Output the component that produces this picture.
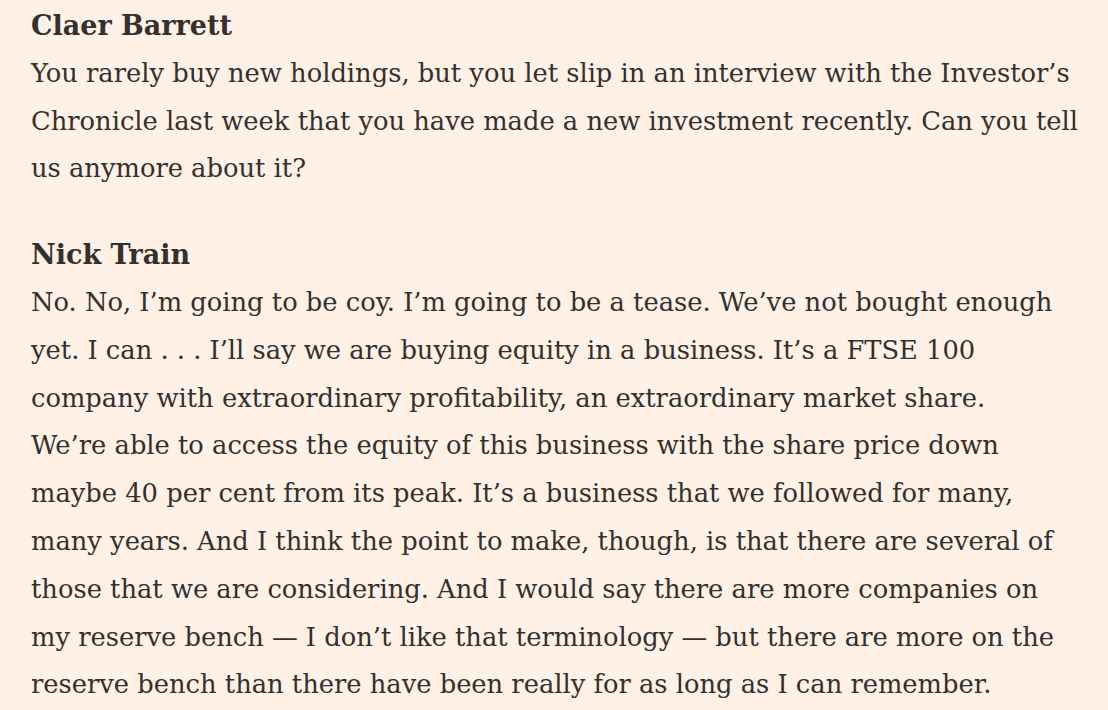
const sections = [
  {
    speaker: 'Claer Barrett',
    lines: [
      'You rarely buy new holdings, but you let slip in an interview with the Investor’s',
      'Chronicle last week that you have made a new investment recently. Can you tell',
      'us anymore about it?',
    ],
  },
  {
    speaker: 'Nick Train',
    lines: [
      'No. No, I’m going to be coy. I’m going to be a tease. We’ve not bought enough',
      'yet. I can . . . I’ll say we are buying equity in a business. It’s a FTSE 100',
      'company with extraordinary profitability, an extraordinary market share.',
      'We’re able to access the equity of this business with the share price down',
      'maybe 40 per cent from its peak. It’s a business that we followed for many,',
      'many years. And I think the point to make, though, is that there are several of',
      'those that we are considering. And I would say there are more companies on',
      'my reserve bench — I don’t like that terminology — but there are more on the',
      'reserve bench than there have been really for as long as I can remember.',
    ],
  },
]

export default function App() {
  return (
    <div className="h-[710px] w-[1108px] overflow-hidden bg-[#fff1e5] pl-[31px] pt-[2px] text-[#33302e] font-['DejaVu_Serif',serif] text-[25.75px] leading-[47.8px]">
      {sections.map((s) => (
        <div key={s.speaker} className="mb-[38px]">
          <div className="text-[27px] font-bold">{s.speaker}</div>
          {s.lines.map((l) => (
            <div key={l} className="whitespace-nowrap">{l}</div>
          ))}
        </div>
      ))}
    </div>
  )
}
